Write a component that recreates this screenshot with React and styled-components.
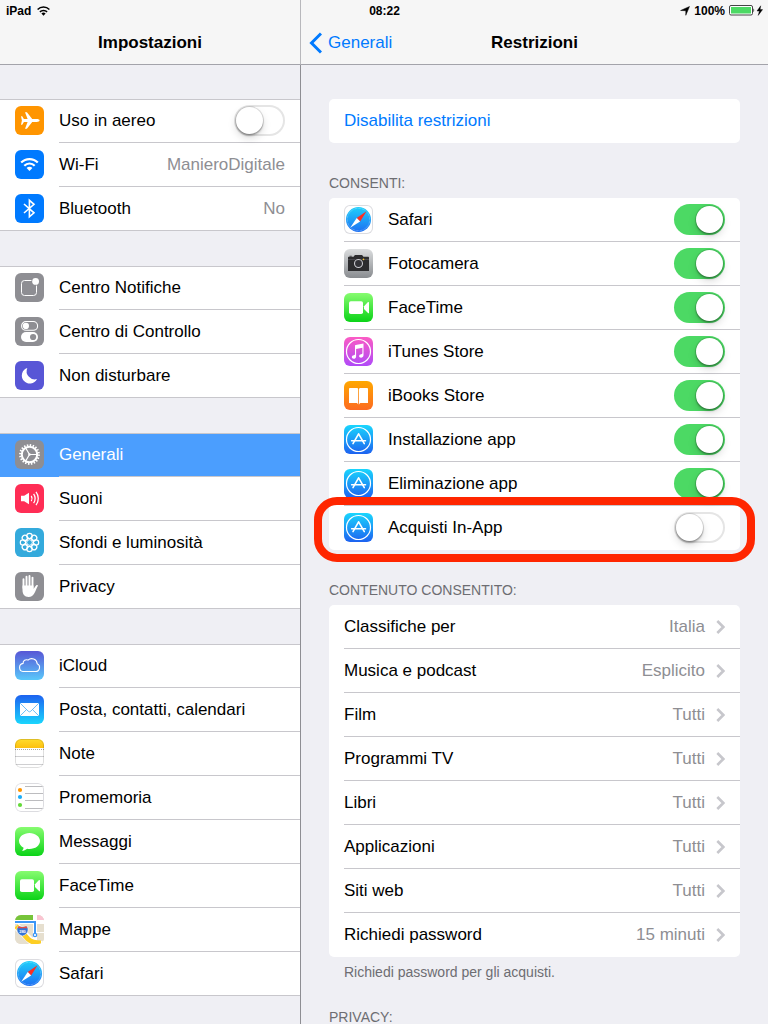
import React, { useId } from "react";
import styled, { createGlobalStyle, css } from "styled-components";

const color = {
  canvas: "#efeff4",
  bar: "#f6f6f6",
  barLine: "#a3a3aa",
  line: "#c8c7cc",
  blue: "#007aff",
  selected: "#4b9efe",
  green: "#4cd964",
  grey: "#8e8e93",
  label: "#6d6d72",
  ring: "#ff2600",
};

const GlobalStyle = createGlobalStyle`
  *, *::before, *::after { box-sizing: border-box; }
  body {
    margin: 0;
    background: ${color.canvas};
    color: #000;
    font-family: "Liberation Sans", Arial, sans-serif;
    font-size: 17px;
    line-height: 20px;
  }
`;

const Shell = styled.div`
  position: relative;
  display: flex;
  height: 100vh;
  overflow: hidden;
`;

const StatusBar = styled.div`
  position: absolute;
  inset: 0 0 auto;
  z-index: 1;
  display: grid;
  grid-template-columns: 1fr auto 1fr;
  align-items: center;
  height: 20px;
  padding: 2px 5px 0 6px;
  font-size: 12px;
  line-height: 16px;
  font-weight: bold;
`;

const StatusSide = styled.div`
  display: flex;
  align-items: center;
  justify-content: ${(p) => (p.$end ? "flex-end" : "flex-start")};
  gap: ${(p) => (p.$end ? "4px" : "6px")};
`;

const Sidebar = styled.aside`
  display: flex;
  flex-direction: column;
  flex: 0 0 301px;
  border-right: 1px solid ${color.grey};
`;

const Detail = styled.main`
  display: flex;
  flex-direction: column;
  flex: 1;
  min-width: 0;
`;

const NavBar = styled.header`
  display: grid;
  grid-template-columns: 1fr auto 1fr;
  align-items: center;
  flex: none;
  height: 65px;
  padding: 22px 8px 0;
  background: ${color.bar};
  border-bottom: 1px solid ${color.barLine};
`;

const SidebarNavBar = styled(NavBar)`
  margin-right: -1px;
  border-right: 1px solid #b8b8bc;
`;

const Title = styled.h1`
  grid-column: 2;
  margin: 0;
  font-size: 17px;
  line-height: 20px;
`;

const BackLink = styled.a`
  grid-column: 1;
  display: flex;
  align-items: center;
  gap: 6px;
  color: ${color.blue};
  text-decoration: none;
`;

const Scroller = styled.div`
  flex: 1;
  min-height: 0;
  overflow-y: auto;
  scrollbar-width: none;
  padding: ${(p) => (p.$inset ? "34px 28px" : "34px 0")};
`;

const Groups = styled.nav`
  display: flex;
  flex-direction: column;
  gap: 35px;
`;

const List = styled.ul`
  margin: 0;
  padding: 0;
  list-style: none;
  background: #fff;
`;

const PlainGroup = styled(List)`
  position: relative;
  &::after {
    content: "";
    position: absolute;
    inset: 0;
    border: solid ${color.line};
    border-width: 1px 0;
    pointer-events: none;
  }
`;

const Card = styled(List)`
  border-radius: 5px;
`;

const Item = styled.li`
  position: relative;
`;

const rowLook = css`
  display: flex;
  height: 44px;
  width: 100%;
  padding: 0 0 0 15px;
  border: 0;
  background: ${(p) => (p.$selected ? color.selected : "transparent")};
  color: ${(p) => (p.$selected ? "#fff" : p.$accent ? color.blue : "inherit")};
  font: inherit;
  text-align: left;
  text-decoration: none;
  cursor: pointer;
`;

const RowLink = styled.a`${rowLook}`;
const RowButton = styled.button`${rowLook}`;
const RowLabel = styled.label`${rowLook}`;

const RowBody = styled.span`
  display: flex;
  align-items: center;
  flex: 1;
  min-width: 0;
  padding-right: 15px;
  border-bottom: 1px solid ${color.line};
  ${Item}:last-child & {
    border-color: transparent;
  }
`;

const RowText = styled.span`
  flex: 1;
  white-space: nowrap;
`;

const RowValue = styled.span`
  color: ${color.grey};
  white-space: nowrap;
`;

const Chevron = styled.svg`
  flex: none;
  margin-left: 11px;
`;

const Tile = styled.span`
  flex: none;
  width: 29px;
  height: 29px;
  margin: ${(p) => (p.$lead ? "7px 15px 0 0" : "0 15px 0 0")};
  border-radius: 6px;
  background: ${(p) => p.$fill};
  box-shadow: ${(p) => (p.$outlined ? "inset 0 0 0 1px #dcdce0" : "none")};
  overflow: hidden;
`;

const Glyph = styled.svg`
  display: block;
  width: 29px;
  height: 29px;
  fill: none;
  stroke: none;
`;

const Toggle = styled.input`
  appearance: none;
  position: relative;
  flex: none;
  width: 51px;
  height: 31px;
  margin: 0;
  border-radius: 16px;
  background: #fff;
  box-shadow: inset 0 0 0 2px #e5e5e5;
  cursor: pointer;
  &::before {
    content: "";
    position: absolute;
    top: 2px;
    left: 2px;
    width: 27px;
    height: 27px;
    border-radius: 50%;
    background: #fff;
    box-shadow: 0 0 0 1px rgba(0, 0, 0, 0.12), 0 2px 2px rgba(0, 0, 0, 0.25),
      0 4px 8px rgba(0, 0, 0, 0.15);
  }
  &:checked {
    background: ${color.green};
    box-shadow: none;
  }
  &:checked::before {
    left: 22px;
  }
`;

const SectionLabel = styled.h2`
  margin: 0;
  padding: 32px 0 7px;
  color: ${color.label};
  font-size: 14px;
  line-height: 16px;
  font-weight: normal;
  text-transform: uppercase;
`;

const Footnote = styled.p`
  height: 20px;
  margin: 0;
  padding: 7px 15px 0;
  color: ${color.label};
  font-size: 14px;
  line-height: 16px;
`;

const Ring = styled.span`
  position: absolute;
  inset: -9px -15px -12px;
  border: 8px solid ${color.ring};
  border-radius: 23px;
  pointer-events: none;
`;

function AirplaneIcon() {
  return (
    <path
      fill="#fff"
      d="M24.6 14.5c0-.8-1.3-1.4-2.8-1.4h-4.6L11.9 6.200H10l2.600 6.900H8.900L7.200 10.300H6l.9 4.200-.9 4.200h1.200l1.700-2.800h3.700L10 22.800h1.900l5.300-6.900h4.600c1.500 0 2.800-.6 2.800-1.400z"
    />
  );
}

function WifiIcon() {
  return (
    <g stroke="#fff" strokeWidth="2.200">
      <path d="M6.200 12.600a11.600 11.600 0 0 1 16.600 0" />
      <path d="M9.300 15.700a7.200 7.200 0 0 1 10.400 0" />
      <path stroke="none" fill="#fff" d="M14.500 21l-2.900-3a4 4 0 0 1 5.800 0z" />
    </g>
  );
}

function BluetoothIcon() {
  return <path stroke="#fff" strokeWidth="1.600" d="M9 10l10 8.800-4.600 4V6.300l4.600 4L9 19" />;
}

function NotificationIcon() {
  return (
    <>
      <rect x="6.500" y="7.500" width="15" height="15" rx="3" stroke="#fff" />
      <circle cx="20.600" cy="8.400" r="4.300" fill={color.grey} />
      <circle cx="20.600" cy="8.400" r="3.400" fill="#fff" />
    </>
  );
}

function ControlIcon() {
  return (
    <>
      <rect x="6.600" y="4.500" width="16" height="8.800" rx="4.400" stroke="#fff" strokeWidth="1.100" />
      <circle cx="10.900" cy="8.900" r="3.100" fill="#fff" />
      <rect x="6" y="15" width="17" height="10" rx="5" fill="#fff" />
      <circle cx="18.100" cy="20" r="3.100" fill={color.grey} />
    </>
  );
}

function MoonIcon() {
  return <path fill="#fff" d="M12.300 7a8 8 0 1 0 9.700 11.100 8.200 8.200 0 0 1-9.700-11.100z" />;
}

function GearIcon() {
  return (
    <g stroke="#fff">
      <circle cx="14.500" cy="14.500" r="9.300" strokeWidth="2.200" strokeDasharray="1.460 1.460" />
      <circle cx="14.500" cy="14.500" r="7.700" strokeWidth="2" />
      <path strokeWidth="1.200" d="M14.500 14.500H22M14.500 14.500L10.700 8M14.500 14.500L10.700 21" />
      <circle cx="14.500" cy="14.500" r="1.200" fill="#fff" stroke="none" />
    </g>
  );
}

function SoundIcon() {
  return (
    <g stroke="#fff" strokeWidth="1.300">
      <path stroke="none" fill="#fff" d="M6 11.800h3.200L14 8.800v11.400l-4.800-3H6z" />
      <path d="M16.300 11.900a5 5 0 0 1 0 5.200M18.600 9.900a8 8 0 0 1 0 9.200M21 7.800a11 11 0 0 1 0 13.400" />
    </g>
  );
}

function FlowerIcon() {
  const petals = [0, 45, 90, 135, 180, 225, 270, 315];
  return (
    <g stroke="#fff" strokeWidth="1.200">
      {petals.map((a) => (
        <g key={a} transform={`rotate(${a} 14.5 14.5)`}>
          <circle cx="14.500" cy="8" r="2.700" />
          <path strokeWidth="1" d="M12.300 9.600a3.200 3.200 0 0 0 4.400 0" />
        </g>
      ))}
      <circle cx="14.500" cy="14.500" r="2.800" strokeWidth="1" />
    </g>
  );
}

function HandIcon() {
  return (
    <>
      <path
        stroke="#fff"
        strokeWidth="1.900"
        strokeLinecap="round"
        d="M8.500 7.300V16M11.500 4.800V15M14.500 3.900V15M17.500 5.600V16"
      />
      <path
        fill="#fff"
        d="M7.500 13.500h11v3.300c.8-.8 1.700-2.500 2.600-3.400.8-.7 2.100-.3 1.700.5-1.100 1.700-2 4.600-3.300 7.100-1.500 2.800-3.100 3.900-5.900 3.900-4.200 0-6.100-2.900-6.100-7z"
      />
    </>
  );
}

function CloudIcon() {
  return (
    <path
      stroke="#fff"
      strokeWidth="1.100"
      d="M8 20.500h12.500a4.100 4.100 0 0 0 1.700-7.800 5.500 5.500 0 0 0-9.200-3.600 3.400 3.400 0 0 0-4.900 3.300A4.100 4.100 0 0 0 8 20.500z"
    />
  );
}

function MailIcon() {
  return (
    <>
      <rect x="5" y="8" width="19" height="13" rx="1" fill="#fff" />
      <path stroke="#4aaef5" strokeWidth=".8" d="M5.300 8.300l7.900 7.900q1.300 1.200 2.600 0l7.900-7.900M5.300 20.700l6.200-6.100M23.700 20.700l-6.200-6.100" />
    </>
  );
}

function NoteIcon() {
  const id = useId();
  return (
    <>
      <linearGradient id={id} x2="0" y2="1">
        <stop stopColor="#ffdc2e" />
        <stop offset="1" stopColor="#fdc00f" />
      </linearGradient>
      <path fill={`url(#${id})`} d="M0 0h29v9H0z" />
      <path stroke="#a9a9a0" strokeDasharray="1 1" d="M0 10.500h29" />
      <path stroke="#c9c9cc" strokeWidth=".9" d="M0 17.500h29M0 25.500h29" />
      <rect x=".5" y=".5" width="28" height="28" rx="5.500" stroke="#000" strokeOpacity=".13" />
    </>
  );
}

function ReminderIcon() {
  return (
    <>
      <path stroke="#b4b4b8" strokeWidth=".9" d="M10 3.500h19M10 10.500h19M10 17.500h19M10 25.500h19" />
      <circle cx="5" cy="7" r="2.100" fill="#ff9500" />
      <circle cx="5" cy="14" r="2.100" fill="#1badf8" />
      <circle cx="5" cy="22" r="2.100" fill="#63da38" />
      <rect x=".5" y=".5" width="28" height="28" rx="5.500" stroke="#dcdce0" />
    </>
  );
}

function BubbleIcon() {
  return (
    <path
      fill="#fff"
      d="M14.500 5.900C8.700 5.900 4 9.500 4 14c0 2.800 1.800 5.200 4.600 6.700-.1 1.100-.9 2.300-1.700 3.100 1.900-.1 3.900-.9 5.200-2.100.8.200 1.600.300 2.400.3 5.800 0 10.500-3.600 10.500-8s-4.700-8.100-10.500-8.100z"
    />
  );
}

function VideoIcon() {
  return (
    <g fill="#fff">
      <rect x="5" y="8.200" width="14" height="12.800" rx="1.800" />
      <path d="M20 13.200l4-4.100c.4-.4 1-.2 1 .4v10.200c0 .6-.6.8-1 .4l-4-4.100z" />
    </g>
  );
}

function MapIcon() {
  return (
    <>
      <path fill="#e6dfcf" d="M0 0h29v29H0z" />
      <path fill="#76c43a" d="M0 0h18v5H0z" />
      <path fill="#fbc4d2" d="M22 0h7v5h-7z" />
      <path fill="#fff" d="M0 5h29v4H0zM18 0h4v29h-4zM22 17h7v1h-7zM22 26h7v2h-7z" />
      <path stroke="#fff" strokeWidth="7" d="M1 11l18 18" />
      <path stroke="#fdce24" strokeWidth="5" d="M1 11l12 13q4 4 13 4" />
      <path stroke="#3c96f6" strokeWidth="2" d="M0 7h20v11" />
      <circle cx="20" cy="20" r="1.700" fill="#fff" stroke="#3c96f6" strokeWidth="1.200" />
      <path fill="#3373d6" stroke="#fff" strokeWidth=".5" d="M3.500 11l4 1 4-1c1.500 1.500 2 3.500 1.200 5.500C12 18.500 10.500 20 7.500 21c-3-1-4.500-2.500-5.200-4.500-.8-2-.3-4 1.200-5.500z" />
      <path fill="#ea4a3c" d="M3.600 11.300l3.900 1 3.900-1 1 2H2.600z" />
      <text x="7.500" y="17.500" textAnchor="middle" fontSize="4" fontWeight="bold" fill="#fff">280</text>
    </>
  );
}

function SafariIcon() {
  const id = useId();
  return (
    <>
      <linearGradient id={id} x2="0" y2="1">
        <stop stopColor="#1fd0fb" />
        <stop offset="1" stopColor="#1d6ff2" />
      </linearGradient>
      <circle cx="14.500" cy="14.500" r="12.500" fill={`url(#${id})`} />
      <circle cx="14.500" cy="14.500" r="11.200" stroke="#fff" strokeOpacity=".45" strokeDasharray=".6 .8" />
      <path fill="#ff2d20" d="M22.500 6.200l-6.400 10.200-3.400-3.400z" />
      <path fill="#fff" d="M6.200 22.800l6.500-9.800 3.400 3.400z" />
    </>
  );
}

function CameraIcon() {
  return (
    <>
      <path fill="#2c2c2e" d="M4 8.700c0-.7.4-1 1-1h4.600l1.300-1.700h7.200l1.300 1.700H24c.6 0 1 .3 1 1V22H4z" />
      <path fill="#45454a" d="M5.500 6.700h2.300v1H5.500z" />
      <path stroke="#55555a" strokeWidth=".7" d="M4 10.500h21" />
      <circle cx="14.500" cy="14.500" r="5" fill="#2c2c2e" />
      <circle cx="14.500" cy="14.500" r="4" fill="#333338" stroke="#c9c9ce" strokeWidth="1.100" />
      <circle cx="19.500" cy="10.400" r=".8" fill="#f7c62e" />
    </>
  );
}

function MusicIcon() {
  return (
    <>
      <circle cx="14.500" cy="14.500" r="12" stroke="#fff" strokeWidth="1.200" />
      <path
        fill="#fff"
        d="M19.500 6.600v11.700c0 1.500-1.200 2.400-2.500 2.400-1.100 0-1.900-.7-1.900-1.600 0-1.100 1-1.700 2.100-1.900.9-.2 1.200-.4 1.200-1.200v-5.200l-6.300 1.300v7.300c0 1.500-1.200 2.300-2.400 2.300-1.100 0-1.900-.6-1.900-1.600 0-1.100.9-1.700 2-1.900.9-.2 1.200-.4 1.200-1.200V8.700c0-.5.200-.7.700-.8z"
      />
    </>
  );
}

function BookIcon() {
  return (
    <path
      fill="#fff"
      d="M5 8.200c0-.8.400-1.200 1.100-1.200H12.500c1 0 1.700.4 1.700 1.400V23.700c-.3-1-.9-1.700-2.300-1.700H5zM24 8.200c0-.8-.4-1.200-1.100-1.200H16.700c-1 0-1.700.4-1.700 1.400V23.700c.3-1 .9-1.700 2.300-1.700H24z"
    />
  );
}

function StoreIcon() {
  return (
    <g stroke="#fff">
      <circle cx="14.500" cy="14.500" r="12" strokeWidth="1.200" />
      <path strokeWidth="1.600" strokeLinecap="round" strokeLinejoin="round" d="M9 18.600L14.600 8.800L20.300 18.600" />
      <path strokeWidth="1.500" strokeLinecap="round" d="M7.600 15.700h13.900" />
    </g>
  );
}

const vertical = (top, bottom) => `linear-gradient(${top}, ${bottom})`;

const icons = {
  airplane: { fill: "#ff9500", Draw: AirplaneIcon },
  wifi: { fill: "#007aff", Draw: WifiIcon },
  bluetooth: { fill: "#007aff", Draw: BluetoothIcon },
  notifications: { fill: color.grey, Draw: NotificationIcon },
  control: { fill: color.grey, Draw: ControlIcon },
  moon: { fill: "#5856d6", Draw: MoonIcon },
  gear: { fill: color.grey, Draw: GearIcon },
  sound: { fill: "#ff2d55", Draw: SoundIcon },
  flower: { fill: "#34aadc", Draw: FlowerIcon },
  hand: { fill: color.grey, Draw: HandIcon },
  cloud: { fill: vertical("#5856d6", "#5ac8fa"), Draw: CloudIcon },
  mail: { fill: vertical("#1d62f0", "#1ad6fd"), Draw: MailIcon },
  note: { fill: "#fff", Draw: NoteIcon },
  reminder: { fill: "#fff", Draw: ReminderIcon },
  bubble: { fill: vertical("#87fc70", "#0bd318"), Draw: BubbleIcon },
  video: { fill: vertical("#87fc70", "#0bd318"), Draw: VideoIcon },
  map: { fill: "#e6dfcf", Draw: MapIcon },
  safari: { fill: "#fff", Draw: SafariIcon, outlined: true },
  camera: { fill: vertical("#dbddde", "#898c90"), Draw: CameraIcon },
  music: { fill: vertical("#fb5bc4", "#b04af8"), Draw: MusicIcon },
  book: { fill: vertical("#ffa800", "#fc6a21"), Draw: BookIcon },
  store: { fill: vertical("#1ad6fd", "#1d62f0"), Draw: StoreIcon },
};

function AppIcon({ name, lead }) {
  const { fill, Draw, outlined } = icons[name];
  return (
    <Tile $fill={fill} $lead={lead} $outlined={outlined}>
      <Glyph viewBox="0 0 29 29" aria-hidden="true">
        <Draw />
      </Glyph>
    </Tile>
  );
}

const sidebarGroups = [
  [
    { icon: "airplane", text: "Uso in aereo", toggle: true },
    { icon: "wifi", text: "Wi-Fi", value: "ManieroDigitale" },
    { icon: "bluetooth", text: "Bluetooth", value: "No" },
  ],
  [
    { icon: "notifications", text: "Centro Notifiche" },
    { icon: "control", text: "Centro di Controllo" },
    { icon: "moon", text: "Non disturbare" },
  ],
  [
    { icon: "gear", text: "Generali", selected: true },
    { icon: "sound", text: "Suoni" },
    { icon: "flower", text: "Sfondi e luminosità" },
    { icon: "hand", text: "Privacy" },
  ],
  [
    { icon: "cloud", text: "iCloud" },
    { icon: "mail", text: "Posta, contatti, calendari" },
    { icon: "note", text: "Note" },
    { icon: "reminder", text: "Promemoria" },
    { icon: "bubble", text: "Messaggi" },
    { icon: "video", text: "FaceTime" },
    { icon: "map", text: "Mappe" },
    { icon: "safari", text: "Safari" },
  ],
];

const allowed = [
  { icon: "safari", text: "Safari", on: true },
  { icon: "camera", text: "Fotocamera", on: true },
  { icon: "video", text: "FaceTime", on: true },
  { icon: "music", text: "iTunes Store", on: true },
  { icon: "book", text: "iBooks Store", on: true },
  { icon: "store", text: "Installazione app", on: true },
  { icon: "store", text: "Eliminazione app", on: true },
  { icon: "store", text: "Acquisti In-App", on: false, ringed: true },
];

const content = [
  ["Classifiche per", "Italia"],
  ["Musica e podcast", "Esplicito"],
  ["Film", "Tutti"],
  ["Programmi TV", "Tutti"],
  ["Libri", "Tutti"],
  ["Applicazioni", "Tutti"],
  ["Siti web", "Tutti"],
  ["Richiedi password", "15 minuti"],
];

function SidebarRow({ icon, text, value, toggle, selected }) {
  const Row = toggle ? RowLabel : RowLink;
  return (
    <Item>
      <Row href={toggle ? undefined : "#"} $selected={selected} aria-current={selected ? "page" : undefined}>
        <AppIcon name={icon} lead />
        <RowBody>
          <RowText>{text}</RowText>
          {value && <RowValue>{value}</RowValue>}
          {toggle && <Toggle type="checkbox" />}
        </RowBody>
      </Row>
    </Item>
  );
}

function Status() {
  return (
    <StatusBar>
      <StatusSide>
        iPad
        <svg width="13" height="10" viewBox="0 0 13 10" fill="none" stroke="#000" strokeWidth="1.500" aria-hidden="true">
          <path d="M.6 3.500a8.400 8.400 0 0 1 11.800 0M2.900 5.900a5.100 5.100 0 0 1 7.200 0" />
          <path fill="#000" stroke="none" d="M6.500 9.700L4.400 7.600a3 3 0 0 1 4.200 0z" />
        </svg>
      </StatusSide>
      <time>08:22</time>
      <StatusSide $end>
        <svg width="10" height="10" viewBox="0 0 10 10" aria-hidden="true">
          <path stroke="#000" strokeWidth=".5" d="M9.500.5L5.800 9.300V4.700L.6 4.500z" />
        </svg>
        100%
        <svg width="34" height="12" viewBox="0 0 34 12" aria-hidden="true">
          <rect x=".5" y=".5" width="23" height="9.500" rx="1.500" fill="#fff" stroke="#444" />
          <rect x="2" y="2" width="20" height="6.500" fill={color.green} />
          <path fill="#444" d="M24.300 3.500c1.200.2 1.200 3.300 0 3.500z" />
          <path stroke="#000" strokeWidth=".4" d="M31.700.8L28 6h2.400l-1.200 4.400L33.600 4.600h-2.500z" />
        </svg>
      </StatusSide>
    </StatusBar>
  );
}

export default function App() {
  return (
    <Shell>
      <GlobalStyle />
      <Status />
      <Sidebar>
        <SidebarNavBar>
          <Title>Impostazioni</Title>
        </SidebarNavBar>
        <Scroller>
          <Groups>
            {sidebarGroups.map((rows) => (
              <PlainGroup key={rows[0].text}>
                {rows.map((row) => (
                  <SidebarRow key={row.text} {...row} />
                ))}
              </PlainGroup>
            ))}
          </Groups>
        </Scroller>
      </Sidebar>
      <Detail>
        <NavBar>
          <BackLink href="#">
            <svg width="13" height="22" viewBox="0 0 13 22" fill="none" aria-hidden="true">
              <path stroke={color.blue} strokeWidth="3" d="M12 1.500L2.500 11l9.500 9.500" />
            </svg>
            Generali
          </BackLink>
          <Title as="h2">Restrizioni</Title>
        </NavBar>
        <Scroller $inset>
          <Card>
            <Item>
              <RowButton type="button" $accent>
                <RowBody>Disabilita restrizioni</RowBody>
              </RowButton>
            </Item>
          </Card>
          <SectionLabel>Consenti:</SectionLabel>
          <Card>
            {allowed.map(({ icon, text, on, ringed }) => (
              <Item key={text}>
                <RowLabel>
                  <RowBody>
                    <AppIcon name={icon} />
                    <RowText>{text}</RowText>
                    <Toggle type="checkbox" defaultChecked={on} />
                  </RowBody>
                </RowLabel>
                {ringed && <Ring />}
              </Item>
            ))}
          </Card>
          <SectionLabel>Contenuto consentito:</SectionLabel>
          <Card>
            {content.map(([text, value]) => (
              <Item key={text}>
                <RowLink href="#">
                  <RowBody>
                    <RowText>{text}</RowText>
                    <RowValue>{value}</RowValue>
                    <Chevron width="9" height="14" viewBox="0 0 9 14" fill="none" aria-hidden="true">
                      <path stroke="#c7c7cc" strokeWidth="2.600" d="M1.300 1l6 6-6 6" />
                    </Chevron>
                  </RowBody>
                </RowLink>
              </Item>
            ))}
          </Card>
          <Footnote>Richiedi password per gli acquisti.</Footnote>
          <SectionLabel>Privacy:</SectionLabel>
        </Scroller>
      </Detail>
    </Shell>
  );
}
